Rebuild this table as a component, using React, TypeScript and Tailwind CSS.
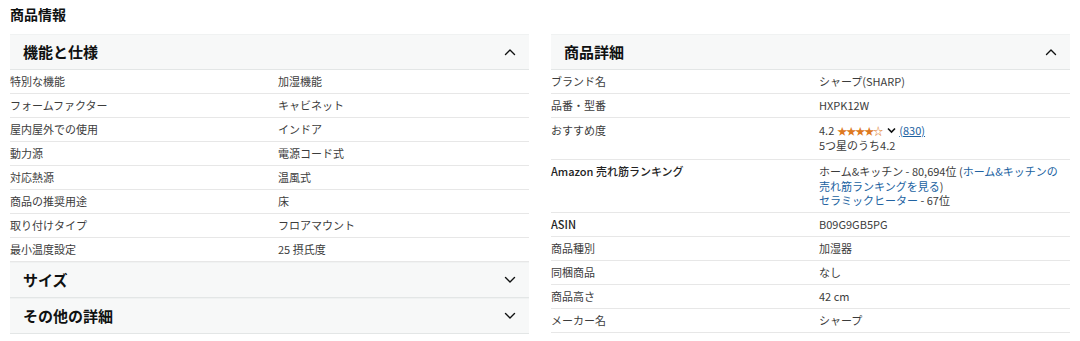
import type { ReactNode } from 'react';

type Row = { label: ReactNode; value: ReactNode; bold?: boolean; cls?: string };

function Chevron({ up }: { up?: boolean }) {
  return (
    <svg width="12" height="8" viewBox="0 0 12 8" className="shrink-0">
      <path
        d={up ? 'M1.5 6.5 L6 2 L10.5 6.5' : 'M1.5 1.5 L6 6 L10.5 1.5'}
        fill="none"
        stroke="#0f1111"
        strokeWidth="1.4"
        strokeLinecap="round"
        strokeLinejoin="round"
      />
    </svg>
  );
}

function Header({ title, open }: { title: string; open?: boolean }) {
  return (
    <div className="flex h-[36px] items-center justify-between border-t border-b border-t-[#f0f2f2] border-b-[#e3e6e6] bg-[#f7f8f8] pl-[13px] pr-[13px]">
      <span className="text-[15px] font-bold text-[#0f1111]">{title}</span>
      <Chevron up={open} />
    </div>
  );
}

function Table({ rows }: { rows: Row[] }) {
  return (
    <div>
      {rows.map((r, i) => (
        <div key={i} className={`grid grid-cols-[268px_1fr] border-b border-[#e7e7e7] text-[11px] text-[#3c3c3c] ${r.cls ?? 'py-1 leading-[15px]'}`}>
          <div className={r.bold ? 'font-medium text-[#222]' : ''}>{r.label}</div>
          <div>{r.value}</div>
        </div>
      ))}
    </div>
  );
}

const link = 'text-[#2162a1]';

const specRows: Row[] = [
  { label: '特別な機能', value: '加湿機能' },
  { label: 'フォームファクター', value: 'キャビネット' },
  { label: '屋内屋外での使用', value: 'インドア' },
  { label: '動力源', value: '電源コード式' },
  { label: '対応熱源', value: '温風式' },
  { label: '商品の推奨用途', value: '床' },
  { label: '取り付けタイプ', value: 'フロアマウント' },
  { label: '最小温度設定', value: '25 摂氏度' },
];

const detailRows: Row[] = [
  { label: 'ブランド名', value: 'シャープ(SHARP)' },
  { label: '品番・型番', value: 'HXPK12W' },
  {
    label: 'おすすめ度',
    cls: 'pt-[5px] pb-[6px] leading-[15px]',
    value: (
      <div>
        <div className="flex items-center gap-[3px]">
          <span>4.2</span>
          <span className="text-[10px] tracking-[-1px] text-[#de7921]">★★★★☆</span>
          <svg width="9" height="7" viewBox="0 0 9 7" className="ml-[2px]">
            <path d="M1 1.5 L4.5 5 L8 1.5" fill="none" stroke="#0f1111" strokeWidth="1.6" />
          </svg>
          <span className={`${link} underline`}>(830)</span>
        </div>
        <div>5つ星のうち4.2</div>
      </div>
    ),
  },
  {
    label: 'Amazon 売れ筋ランキング',
    bold: true,
    cls: 'pt-[4px] pb-[4px] leading-[14.5px]',
    value: (
      <div className="pr-[12px]">
        <div>
          ホーム&amp;キッチン - 80,694位 (<span className={link}>ホーム&amp;キッチンの売れ筋ランキングを見る</span>)
        </div>
        <div>
          <span className={link}>セラミックヒーター</span> - 67位
        </div>
      </div>
    ),
  },
  { label: 'ASIN', value: 'B09G9GB5PG', bold: true },
  { label: '商品種別', value: '加湿器' },
  { label: '同梱商品', value: 'なし' },
  { label: '商品高さ', value: '42 cm' },
  { label: 'メーカー名', value: 'シャープ' },
];

export default function App() {
  return (
    <div
      className="h-[341px] w-[1080px] overflow-hidden bg-white px-[10px] pt-[4px] text-[#0f1111]"
      style={{ fontFamily: '"Noto Sans CJK JP", "Noto Sans", sans-serif' }}
    >
      <h2 className="text-[14px] font-bold leading-[20px]">商品情報</h2>
      <div className="mt-[10px] grid grid-cols-[519px_519px] gap-[22px]">
        <div>
          <Header title="機能と仕様" open />
          <Table rows={specRows} />
          <Header title="サイズ" />
          <Header title="その他の詳細" />
        </div>
        <div>
          <Header title="商品詳細" open />
          <Table rows={detailRows} />
        </div>
      </div>
    </div>
  );
}
